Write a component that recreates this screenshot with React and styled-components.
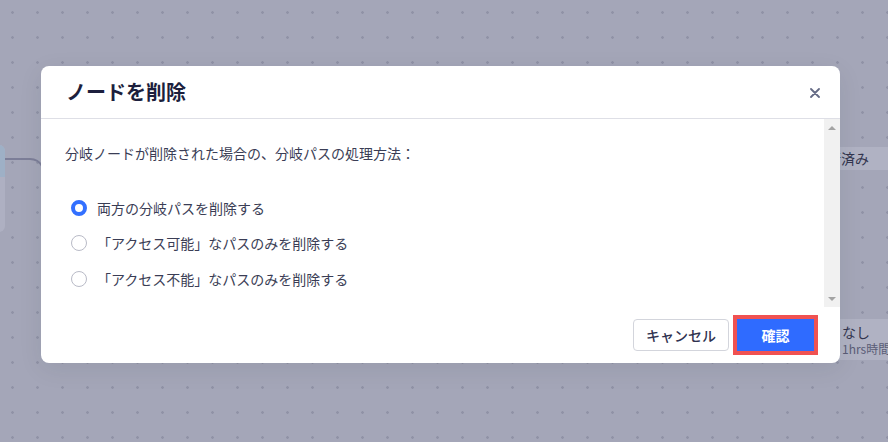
import React, { useState } from "react";
import styled, { createGlobalStyle } from "styled-components";

const Global = createGlobalStyle`
  html, body { margin: 0; padding: 0; }
  body {
    font-family: "Noto Sans CJK JP", "Noto Sans", "Liberation Sans", sans-serif;
    -webkit-font-smoothing: antialiased;
  }
  * { box-sizing: border-box; }
`;

const Canvas = styled.div`
  position: relative;
  width: 888px;
  height: 442px;
  overflow: hidden;
  background-color: #a4a6b8;
  background-image: radial-gradient(circle at center, #9092a6 1px, transparent 1.6px);
  background-size: 25px 25px;
`;

const NodeCard = styled.div`
  position: absolute;
  left: ${(p) => p.$x}px;
  top: ${(p) => p.$y}px;
  width: ${(p) => p.$w}px;
  height: ${(p) => p.$h}px;
  border-radius: 6px;
  background: #aeb0c2;
  overflow: hidden;
  display: flex;
  flex-direction: column;
`;

const NodeHead = styled.div`
  height: 32px;
  background: #9eb0c6;
`;

const NodeBand = styled.div`
  display: flex;
  flex-direction: column;
  justify-content: center;
  padding-left: ${(p) => p.$pad}px;
  height: 100%;
  background: #b0b2c3;
`;

const NodeText = styled.div`
  font-size: 14px;
  line-height: 17px;
  color: #32354f;
  white-space: nowrap;
`;

const NodeSub = styled.div`
  font-size: 12px;
  line-height: 15px;
  color: #5a5d76;
  white-space: nowrap;
`;

const Connector = styled.svg`
  position: absolute;
  left: 0;
  top: 150px;
`;

const Overlay = styled.div`
  position: absolute;
  inset: 0;
  padding: 66px 0 0 41px;
`;

const Modal = styled.div`
  width: 799px;
  height: 297px;
  background: #ffffff;
  border-radius: 8px;
  box-shadow: 0 6px 24px rgba(31, 35, 41, 0.08);
  display: flex;
  flex-direction: column;
  overflow: hidden;
`;

const Header = styled.div`
  height: 53px;
  flex: none;
  display: flex;
  align-items: center;
  justify-content: space-between;
  padding: 0 15px 0 25px;
  border-bottom: 1px solid #dedfe6;
`;

const Title = styled.h2`
  margin: 0;
  font-size: 20px;
  line-height: 28px;
  font-weight: 700;
  color: #1c1f3d;
`;

const CloseButton = styled.button`
  width: 20px;
  height: 20px;
  padding: 0;
  border: none;
  background: transparent;
  display: flex;
  align-items: center;
  justify-content: center;
  margin-top: 1px;
`;

const ScrollArea = styled.div`
  height: 188px;
  flex: none;
  display: flex;
`;

const Body = styled.div`
  flex: 1;
  padding: 23px 24px 0 24px;
`;

const Description = styled.p`
  margin: 0;
  font-size: 14px;
  line-height: 22px;
  color: #3a3d55;
`;

const RadioGroup = styled.div`
  margin-top: 26px;
  padding-left: 6px;
  display: flex;
  flex-direction: column;
`;

const RadioRow = styled.label`
  height: 35.5px;
  display: flex;
  align-items: center;
  gap: 10px;
  cursor: pointer;
`;

const RadioDot = styled.span`
  width: 16px;
  height: 16px;
  border-radius: 50%;
  flex: none;
  background: #ffffff;
  border: ${(p) => (p.$checked ? "4.5px solid #3370ff" : "1.5px solid #b9bbc7")};
`;

const RadioLabel = styled.span`
  font-size: 14px;
  line-height: 22px;
  color: #3a3d55;
`;

const Scrollbar = styled.div`
  width: 16px;
  flex: none;
  background: #f1f1f1;
  display: flex;
  flex-direction: column;
  justify-content: space-between;
  align-items: center;
`;

const ScrollArrow = styled.span`
  height: 17px;
  display: flex;
  align-items: center;
  justify-content: center;
  &::before {
    content: "";
    width: 0;
    height: 0;
    border-left: 4px solid transparent;
    border-right: 4px solid transparent;
    ${(p) =>
      p.$down
        ? "border-top: 4px solid #a3a3a3;"
        : "border-bottom: 4px solid #a3a3a3;"}
  }
`;

const Footer = styled.div`
  flex: 1;
  display: flex;
  justify-content: flex-end;
  align-items: flex-start;
  gap: 8px;
  padding: 12px 26px 0 0;
`;

const Button = styled.button`
  height: 32px;
  width: ${(p) => (p.$primary ? 77 : 96)}px;
  padding: 0;
  white-space: nowrap;
  display: flex;
  align-items: center;
  justify-content: center;
  font-family: inherit;
  font-size: 14px;
  font-weight: ${(p) => (p.$primary ? 700 : 500)};
  color: ${(p) => (p.$primary ? "#ffffff" : "#2f3250")};
  background: ${(p) => (p.$primary ? "#2f6bff" : "#ffffff")};
  border: 1px solid ${(p) => (p.$primary ? "#2f6bff" : "#d3d5dc")};
  border-radius: ${(p) => (p.$primary ? "0" : "4px")};
  outline: ${(p) => (p.$focus ? "4px solid #f05252" : "none")};
  cursor: pointer;
`;

const options = [
  "両方の分岐パスを削除する",
  "「アクセス可能」なパスのみを削除する",
  "「アクセス不能」なパスのみを削除する",
];

export default function App() {
  const [selected, setSelected] = useState(0);
  return (
    <>
      <Global />
      <Canvas>
        <NodeCard $x={-200} $y={145} $w={205} $h={87}>
          <NodeHead />
        </NodeCard>
        <Connector width="60" height="30" viewBox="0 0 60 30">
          <path d="M5 9 H30 Q38 9 42 16" stroke="#7c7e98" strokeWidth="2" fill="none" />
        </Connector>
        <NodeCard $x={780} $y={147} $w={140} $h={23}>
          <NodeBand $pad={33}>
            <NodeText>実行済み</NodeText>
          </NodeBand>
        </NodeCard>
        <NodeCard $x={780} $y={319} $w={140} $h={41}>
          <NodeBand $pad={62}>
            <NodeText>なし</NodeText>
            <NodeSub>1hrs時間</NodeSub>
          </NodeBand>
        </NodeCard>
        <Overlay>
          <Modal>
            <Header>
              <Title>ノードを削除</Title>
              <CloseButton aria-label="close">
                <svg width="10" height="10" viewBox="0 0 10 10">
                  <path d="M1 1 L9 9 M9 1 L1 9" stroke="#646a85" strokeWidth="1.8" strokeLinecap="round" />
                </svg>
              </CloseButton>
            </Header>
            <ScrollArea>
              <Body>
                <Description>分岐ノードが削除された場合の、分岐パスの処理方法：</Description>
                <RadioGroup>
                  {options.map((o, i) => (
                    <RadioRow key={o} onClick={() => setSelected(i)}>
                      <RadioDot $checked={selected === i} />
                      <RadioLabel>{o}</RadioLabel>
                    </RadioRow>
                  ))}
                </RadioGroup>
              </Body>
              <Scrollbar>
                <ScrollArrow />
                <ScrollArrow $down />
              </Scrollbar>
            </ScrollArea>
            <Footer>
              <Button>キャンセル</Button>
              <Button $primary $focus>確認</Button>
            </Footer>
          </Modal>
        </Overlay>
      </Canvas>
    </>
  );
}
